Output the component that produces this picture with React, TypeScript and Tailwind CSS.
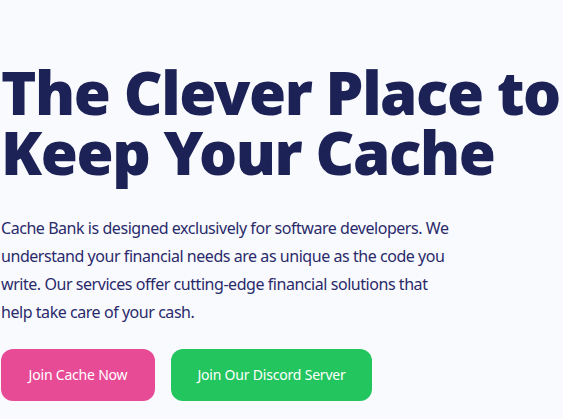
import React from "react";

export default function App() {
  return (
    <div className="min-h-[419px] w-full overflow-hidden bg-[#f9fafd] pl-px" style={{ fontFamily: '"Noto Sans", "Open Sans", sans-serif' }}>
      <h1 className="pt-[62px] text-[60px] font-black leading-[60px] tracking-[-1.4px] text-[#1c2256] whitespace-nowrap">
        The Clever Place to
        <br />
        Keep Your Cache
      </h1>
      <p className="mt-[32px] max-w-[452px] text-[16px] leading-7 tracking-[-0.45px] text-[#2a2a6b]">
        Cache Bank is designed exclusively for software developers. We understand your financial needs are as unique as the code you write. Our services offer cutting-edge financial solutions that help take care of your cash.
      </p>
      <div className="mt-[23px] flex gap-4">
        <button className="w-[154px] rounded-xl bg-[#e84b96] py-4 text-[14px] leading-5 tracking-[-0.2px] text-white">Join Cache Now</button>
        <button className="w-[201px] rounded-xl bg-[#22c55e] py-4 text-[14px] leading-5 tracking-[-0.2px] text-white">Join Our Discord Server</button>
      </div>
    </div>
  );
}
